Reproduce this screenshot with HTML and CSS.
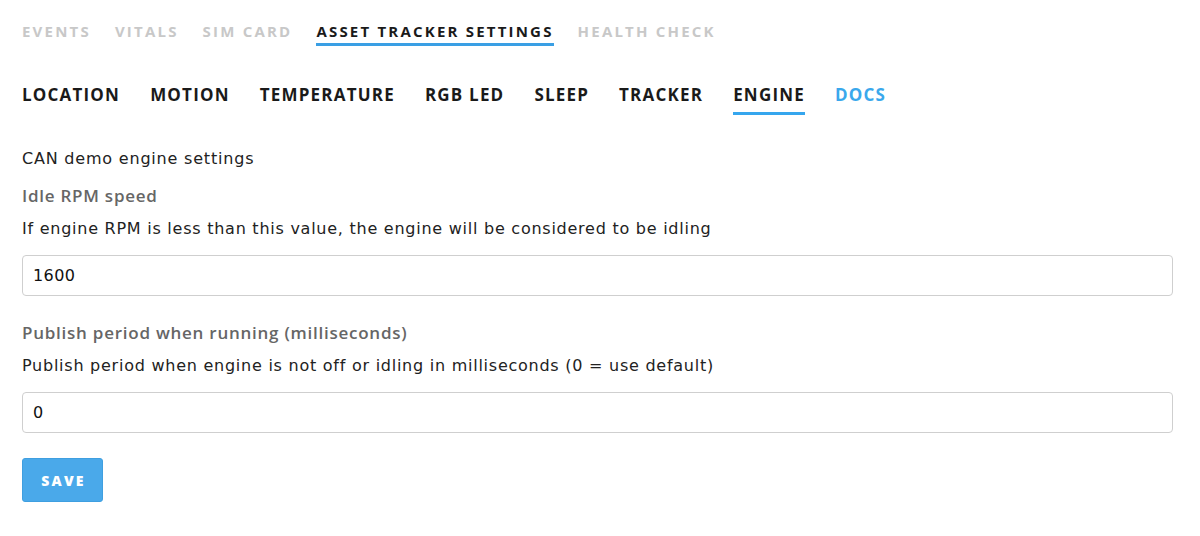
FILE: index.html
```html
<!DOCTYPE html>
<html>
<head>
<meta charset="utf-8">
<link rel="stylesheet" href="styles.css">
</head>
<body>
<div class="page">
  <nav class="topnav">
    <a class="tab">EVENTS</a>
    <a class="tab">VITALS</a>
    <a class="tab">SIM CARD</a>
    <a class="tab active">ASSET TRACKER SETTINGS</a>
    <a class="tab">HEALTH CHECK</a>
  </nav>
  <nav class="subnav">
    <a class="sub">LOCATION</a>
    <a class="sub">MOTION</a>
    <a class="sub">TEMPERATURE</a>
    <a class="sub">RGB LED</a>
    <a class="sub">SLEEP</a>
    <a class="sub">TRACKER</a>
    <a class="sub active">ENGINE</a>
    <a class="sub docs">DOCS</a>
  </nav>
  <form class="settings">
    <p class="intro">CAN demo engine settings</p>
    <div class="field">
      <label class="label">Idle RPM speed</label>
      <p class="desc">If engine RPM is less than this value, the engine will be considered to be idling</p>
      <input class="input" type="text" value="1600">
    </div>
    <div class="field">
      <label class="label">Publish period when running (milliseconds)</label>
      <p class="desc">Publish period when engine is not off or idling in milliseconds (0 = use default)</p>
      <input class="input" type="text" value="0">
    </div>
    <button class="save" type="button">SAVE</button>
  </form>
</div>
</body>
</html>
```
FILE: styles.css
```css
html, body {
  margin: 0;
  padding: 0;
  background: #fff;
}
.page {
  font-family: "Open Sans", "Liberation Sans", sans-serif;
  padding: 0 27px 0 22px;
  color: #222;
}
.topnav {
  display: flex;
  gap: 24px;
  padding-top: 22px;
}
.tab {
  font-size: 15px;
  font-weight: 700;
  letter-spacing: 2.2px;
  color: #c8c8c8;
  padding-bottom: 3px;
  border-bottom: 3px solid transparent;
  line-height: 18px;
}
.tab.active {
  color: #1a1a1a;
  border-bottom-color: #3a9fe4;
}
.subnav {
  display: flex;
  gap: 30px;
  margin-top: 38px;
}
.sub {
  font-size: 17px;
  font-weight: 700;
  letter-spacing: 1.2px;
  color: #1a1a1a;
  line-height: 22px;
  padding-bottom: 6px;
  border-bottom: 3px solid transparent;
}
.sub.active {
  border-bottom-color: #35a6ee;
}
.sub.docs {
  color: #3aa8ec;
}
.settings {
  margin-top: 33px;
  font-family: "DejaVu Sans", "Open Sans", sans-serif;
}
.intro {
  margin: 0;
  font-size: 16px;
  letter-spacing: 0.8px;
  line-height: 22px;
  color: #222;
}
.field {
  margin-top: 15px;
}
.field + .field {
  margin-top: 26px;
}
.label {
  display: block;
  font-family: "Open Sans", sans-serif;
  font-size: 17px;
  font-weight: 600;
  letter-spacing: 0.75px;
  color: #666;
  line-height: 22px;
}
.desc {
  margin: 11px 0 0;
  font-size: 16px;
  letter-spacing: 0.75px;
  line-height: 22px;
  color: #222;
}
.input {
  display: block;
  box-sizing: border-box;
  width: 100%;
  height: 41px;
  margin-top: 15px;
  padding: 0 10px;
  border: 1px solid #cfcfcf;
  border-radius: 4px;
  font-family: inherit;
  font-size: 16px;
  letter-spacing: 0.4px;
  color: #111;
  outline: none;
}
.save {
  margin-top: 25px;
  width: 81px;
  height: 44px;
  padding: 0;
  border: 1px solid #3f9fe0;
  border-radius: 3px;
  background: #4aa9ea;
  color: #fff;
  font-family: "Open Sans", sans-serif;
  font-size: 14px;
  font-weight: 800;
  letter-spacing: 2.2px;
  text-indent: 2px;
  cursor: pointer;
}
```
